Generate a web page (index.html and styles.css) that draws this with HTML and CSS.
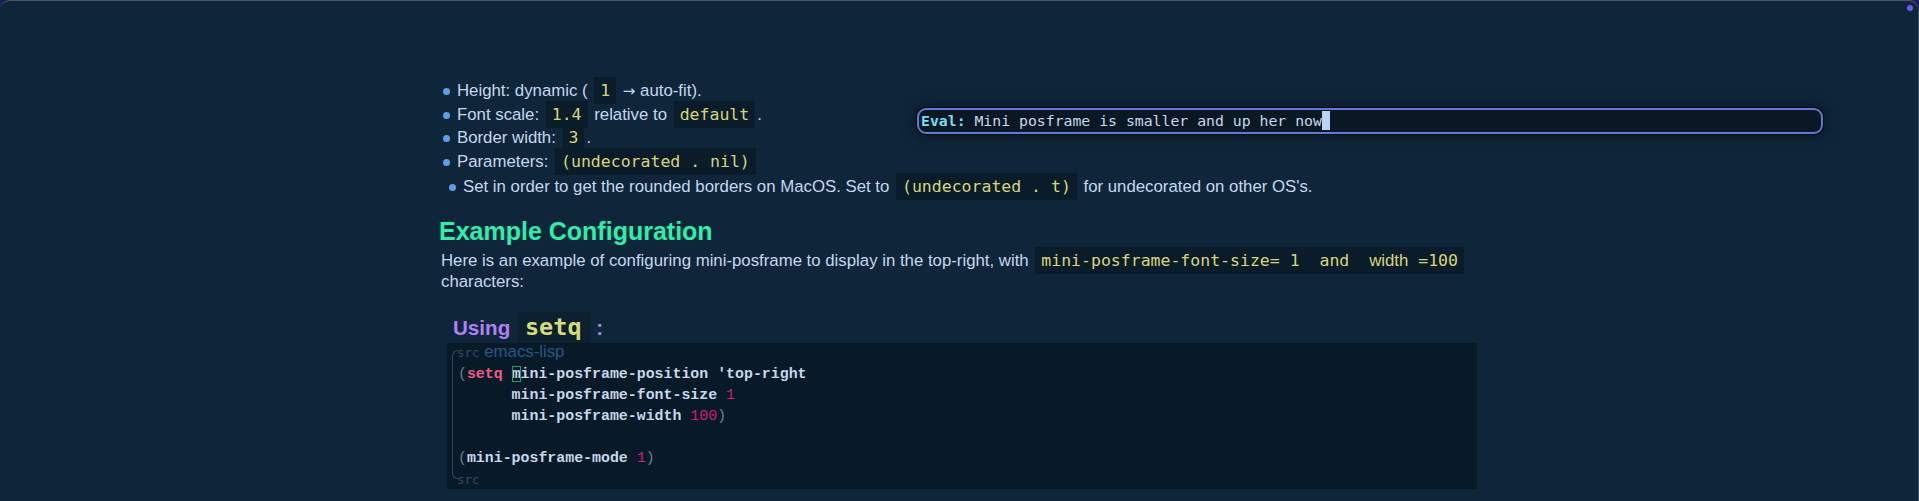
FILE: index.html
```html
<!DOCTYPE html>
<html lang="en">
<head>
<meta charset="utf-8">
<title>mini-posframe</title>
<link rel="stylesheet" href="styles.css">
</head>
<body>
<div class="frame">
  <span class="dot"></span>
  <main class="doc">
    <ul class="list">
      <li>Height: dynamic ( <code class="ic">1</code> <span class="arrow">→</span> auto-fit).</li>
      <li>Font scale: <code class="ic">1.4</code> relative to <code class="ic">default</code>.</li>
      <li>Border width: <code class="ic">3</code>.</li>
      <li>Parameters: <code class="ic">(undecorated . nil)</code>
        <ul class="list sub">
          <li>Set in order to get the rounded borders on MacOS. Set to <code class="ic">(undecorated . t)</code> for undecorated on other OS's.</li>
        </ul>
      </li>
    </ul>
    <h2 class="h2">Example Configuration</h2>
    <p class="para">Here is an example of configuring mini-posframe to display in the top-right, with <code class="ic">mini-posframe-font-size= 1  and  <span class="pw">width</span> =100</code> characters:</p>
    <h3 class="h3">Using <code class="h3-code">setq</code> :</h3>
    <div class="src">
      <div class="fence">
        <div class="src-head"><span class="src-tag">src</span> <span class="src-lang">emacs-lisp</span></div>
<pre class="code"><span class="par">(</span><span class="kw">setq</span> <span class="cur">m</span>ini-posframe-position 'top-right
      mini-posframe-font-size <span class="num">1</span>
      mini-posframe-width <span class="num">100</span><span class="par">)</span>

<span class="par">(</span>mini-posframe-mode <span class="num">1</span><span class="par">)</span></pre>
        <div class="src-foot"><span class="src-tag">src</span></div>
      </div>
    </div>
  </main>
  <div class="posframe"><span class="eval">Eval:</span> Mini posframe is smaller and up her now<span class="cursor"></span></div>
</div>
</body>
</html>
```
FILE: styles.css
```css
html {
  background: #1b1d5c;
}
body {
  margin: 0;
  font-family: "Liberation Sans", Arial, sans-serif;
  color: #c6d6ef;
}
.frame {
  position: relative;
  min-height: 501px;
  box-sizing: border-box;
  background: #0f263a;
  border-top: 1px solid #4b5969;
  border-right: 1px solid #3a4b5c;
  border-radius: 10px 10px 0 0;
  overflow: hidden;
}
.dot {
  position: absolute;
  top: 4px;
  right: 5px;
  width: 6px;
  height: 6px;
  border-radius: 50%;
  background: #6a5cf5;
}
.doc {
  width: 1040px;
  margin: 0 auto;
  padding-top: 78px;
  font-size: 16.8px;
}
.list {
  list-style: none;
  margin: 0;
  padding: 0 0 0 4px;
}
.list li {
  display: block;
  line-height: 23.5px;
  position: relative;
  padding-left: 14px;
}
.list li::before {
  content: "";
  position: absolute;
  left: 0;
  top: 9px;
  width: 7px;
  height: 7px;
  border-radius: 50%;
  background: #5d9ee8;
}
.sub {
  margin-top: 2px;
  padding-left: 0;
}
.sub > li {
  padding-left: 10px;
  margin-left: -4px;
}
.sub > li::before {
  left: -4px;
}
.arrow {
  font-family: "DejaVu Sans", sans-serif;
  font-size: 15px;
  line-height: 1;
}
.ic {
  font-family: "DejaVu Sans Mono", monospace;
  font-size: 16.5px;
  line-height: 1;
  color: #d9d47c;
  background: #0a1c2a;
  padding: 4px 6px;
  margin: 0 2px;
  white-space: pre;
}
.pw {
  font-family: "Liberation Sans", Arial, sans-serif;
  font-size: 16.8px;
}
.h2 {
  margin: 18px 0 0;
  font-size: 25px;
  line-height: 28px;
  font-weight: bold;
  color: #2cefaa;
}
.para {
  margin: 5px 0 0 2px;
  line-height: 21.5px;
}
.h3 {
  margin: 19px 0 0;
  padding-left: 14px;
  font-size: 20.6px;
  line-height: 31px;
  font-weight: bold;
  color: #ae82f3;
}
.h3-code {
  display: inline-block;
  vertical-align: top;
  font-family: "DejaVu Sans Mono", monospace;
  font-size: 23.5px;
  font-weight: bold;
  color: #d6dc7c;
  background: #0c2030;
  padding: 0 9px 0 8px;
  margin-left: 1px;
}
.src {
  margin-left: 8px;
  width: 1030px;
  background: #081a28;
  padding: 0 0 0 5px;
  box-sizing: border-box;
  height: 146px;
}
.fence {
  position: relative;
  padding-left: 5px;
  top: -2px;
}
.fence::before {
  content: "";
  position: absolute;
  left: 0;
  top: 9px;
  bottom: 10px;
  width: 5px;
  border: 1px solid #274a6b;
  border-right: none;
  border-radius: 6px 0 0 6px;
}
.src-head {
  line-height: 22px;
}
.src-tag {
  font-family: "DejaVu Sans Mono", monospace;
  font-size: 12.5px;
  color: #2b4a68;
}
.src-lang {
  font-size: 16.8px;
  color: #2b5784;
}
.code {
  margin: 0;
  font-family: "Liberation Mono", "Courier New", monospace;
  font-size: 14.9px;
  line-height: 21.2px;
  font-weight: bold;
  color: #c9d6ea;
  padding-left: 1px;
}
.par { color: #6e7e8f; font-weight: normal; }
.kw { color: #f25888; }
.num { color: #d71c73; font-weight: normal; }
.cur {
  outline: 1px solid #2e9a62;
  outline-offset: -1px;
}
.src-foot {
  line-height: 19px;
  margin-top: -1px;
}
.posframe {
  position: absolute;
  left: 917px;
  top: 107px;
  width: 906px;
  height: 26px;
  box-sizing: border-box;
  border: 2px solid #5a7ed5;
  border-radius: 9px;
  background: #0a1825;
  box-shadow: 0 0 0 1px #02070c, 0 0 14px 2px rgba(3, 10, 18, 0.55);
  font-family: "DejaVu Sans Mono", monospace;
  font-size: 14.8px;
  line-height: 22px;
  color: #c9d6ea;
  padding-left: 2px;
  white-space: pre;
}
.eval {
  color: #79dff0;
  font-weight: bold;
}
.cursor {
  display: inline-block;
  width: 8px;
  height: 19px;
  vertical-align: -4px;
  background: #b9d4fb;
}
```
